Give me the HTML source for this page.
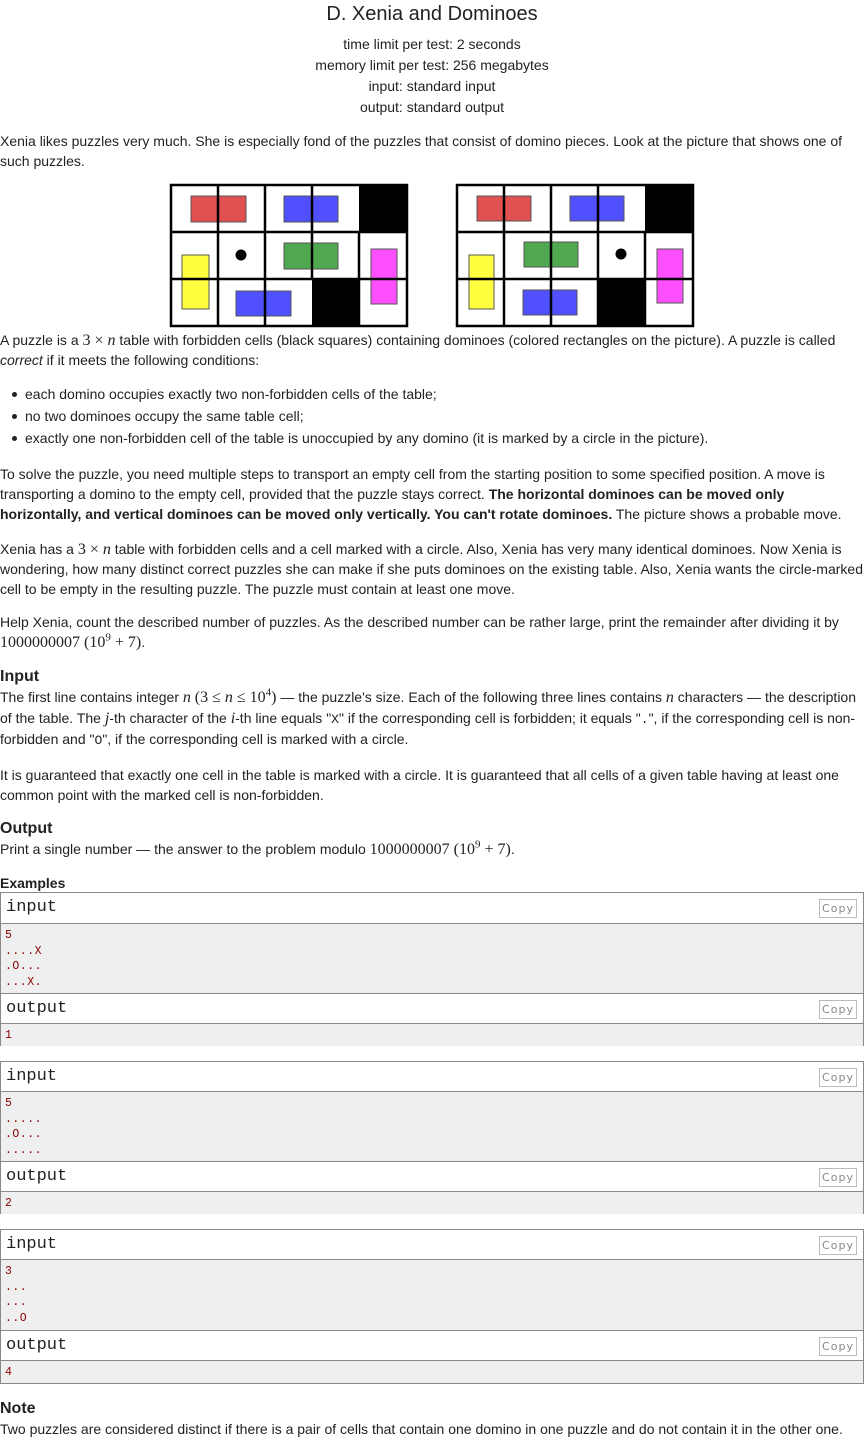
<!DOCTYPE html>
<html><head><meta charset="utf-8"><style>
*{margin:0;padding:0;box-sizing:border-box}
body{width:864px;height:1437px;position:relative;background:#fff;font-family:"Liberation Sans",sans-serif;font-size:14px;color:#222;overflow:hidden}
.a{position:absolute;left:0;width:864px;line-height:20px}
.c{text-align:center}
.m{font-family:"Liberation Serif",serif;font-size:16px;line-height:0}
.mi{font-family:"Liberation Serif",serif;font-size:16px;font-style:italic;line-height:0}
sup{line-height:0;font-size:11px}
.h{font-weight:bold;font-size:16px}
.tt{font-family:"Liberation Mono",monospace;font-size:13px;line-height:0}
.hd{position:absolute;left:0;width:864px;font-family:"Liberation Mono",monospace;font-size:17px;padding-left:5px;border-left:1px solid #888;border-right:1px solid #888;border-top:1px solid #888;background:#fff}
.pr{position:absolute;left:0;width:864px;background:#efefef;border-left:1px solid #888;border-right:1px solid #888;border-top:1px solid #888;font-family:"Liberation Mono",monospace;font-size:11.5px;letter-spacing:0.5px;line-height:15.5px;color:#8b0000;padding:4px 0 0 4px;white-space:pre}
.cp{position:absolute;right:6px;top:6px;width:38px;height:19px;border:1px solid #bbb;font-family:"DejaVu Sans",sans-serif;font-size:11px;color:#888;text-align:center;line-height:17px;letter-spacing:1px}
ul{position:absolute;left:25px;top:383px;list-style:none}
li{line-height:22px;position:relative}
li:before{content:"";position:absolute;left:-13px;top:9px;width:5px;height:5px;border-radius:50%;background:#222}
</style></head><body>
<div class="a c" style="top:3px;font-size:20px;line-height:22px">D. Xenia and Dominoes</div>
<div class="a c" style="top:34px;line-height:21px">time limit per test: 2 seconds<br>memory limit per test: 256 megabytes<br>input: standard input<br>output: standard output</div>
<div class="a" style="top:131px">Xenia likes puzzles very much. She is especially fond of the puzzles that consist of domino pieces. Look at the picture that shows one of such puzzles.</div>
<svg style="position:absolute;left:0;top:0" width="864" height="340">
<g>
<rect x="171" y="185" width="236" height="141" fill="#fff"/>
<rect x="359" y="185" width="48" height="47" fill="#000"/>
<rect x="312" y="279" width="47" height="47" fill="#000"/>
<rect x="191" y="196" width="55" height="26" fill="#e05050" stroke="#555"/>
<rect x="284" y="196" width="54" height="26" fill="#5050ff" stroke="#555"/>
<rect x="284" y="243" width="54" height="26" fill="#50a850" stroke="#555"/>
<rect x="182" y="255" width="27" height="54" fill="#ffff40" stroke="#555"/>
<rect x="371" y="249" width="26" height="55" fill="#ff50ff" stroke="#555"/>
<rect x="236" y="291" width="55" height="25" fill="#5050ff" stroke="#555"/>
<circle cx="241" cy="255" r="5.5" fill="#000"/>
<g stroke="#000" stroke-width="2.5" fill="none">
<rect x="171" y="185" width="236" height="141"/>
<line x1="171" y1="232" x2="407" y2="232"/><line x1="171" y1="279" x2="407" y2="279"/>
<line x1="218" y1="185" x2="218" y2="326"/><line x1="265" y1="185" x2="265" y2="326"/>
<line x1="312" y1="185" x2="312" y2="279"/><line x1="359" y1="232" x2="359" y2="326"/>
</g></g>
<g>
<rect x="457" y="185" width="236" height="141" fill="#fff"/>
<rect x="645" y="185" width="48" height="47" fill="#000"/>
<rect x="598" y="279" width="47" height="47" fill="#000"/>
<rect x="477" y="196" width="54" height="25" fill="#e05050" stroke="#555"/>
<rect x="570" y="196" width="54" height="25" fill="#5050ff" stroke="#555"/>
<rect x="524" y="242" width="54" height="25" fill="#50a850" stroke="#555"/>
<rect x="469" y="255" width="25" height="54" fill="#ffff40" stroke="#555"/>
<rect x="657" y="249" width="26" height="54" fill="#ff50ff" stroke="#555"/>
<rect x="523" y="290" width="54" height="25" fill="#5050ff" stroke="#555"/>
<circle cx="621" cy="254" r="5.5" fill="#000"/>
<g stroke="#000" stroke-width="2.5" fill="none">
<rect x="457" y="185" width="236" height="141"/>
<line x1="457" y1="232" x2="693" y2="232"/><line x1="457" y1="279" x2="693" y2="279"/>
<line x1="504" y1="185" x2="504" y2="326"/><line x1="551" y1="185" x2="551" y2="326"/>
<line x1="598" y1="185" x2="598" y2="326"/><line x1="645" y1="232" x2="645" y2="326"/>
</g></g>
</svg>
<div class="a" style="top:330px">A puzzle is a <span class="m">3 × <i>n</i></span> table with forbidden cells (black squares) containing dominoes (colored rectangles on the picture). A puzzle is called <i>correct</i> if it meets the following conditions:</div>
<ul>
<li>each domino occupies exactly two non-forbidden cells of the table;</li>
<li>no two dominoes occupy the same table cell;</li>
<li>exactly one non-forbidden cell of the table is unoccupied by any domino (it is marked by a circle in the picture).</li>
</ul>
<div class="a" style="top:464px">To solve the puzzle, you need multiple steps to transport an empty cell from the starting position to some specified position. A move is transporting a domino to the empty cell, provided that the puzzle stays correct. <b>The horizontal dominoes can be moved only horizontally, and vertical dominoes can be moved only vertically. You can't rotate dominoes.</b> The picture shows a probable move.</div>
<div class="a" style="top:539px">Xenia has a <span class="m">3 × <i>n</i></span> table with forbidden cells and a cell marked with a circle. Also, Xenia has very many identical dominoes. Now Xenia is wondering, how many distinct correct puzzles she can make if she puts dominoes on the existing table. Also, Xenia wants the circle-marked cell to be empty in the resulting puzzle. The puzzle must contain at least one move.</div>
<div class="a" style="top:612px">Help Xenia, count the described number of puzzles. As the described number can be rather large, print the remainder after dividing it by<br><span class="m">1000000007 (10<sup>9</sup> + 7)</span>.</div>
<div class="a h" style="top:667px">Input</div>
<div class="a" style="top:687px;line-height:21px">The first line contains integer <span class="mi">n</span> <span class="m">(3 ≤ <i>n</i> ≤ 10<sup>4</sup>)</span> — the puzzle's size. Each of the following three lines contains <span class="mi">n</span> characters — the description of the table. The <span class="mi">j</span>-th character of the <span class="mi">i</span>-th line equals "<span class="tt">X</span>" if the corresponding cell is forbidden; it equals "<span class="tt">.</span>", if the corresponding cell is non-forbidden and "<span class="tt">O</span>", if the corresponding cell is marked with a circle.</div>
<div class="a" style="top:765px">It is guaranteed that exactly one cell in the table is marked with a circle. It is guaranteed that all cells of a given table having at least one common point with the marked cell is non-forbidden.</div>
<div class="a h" style="top:819px">Output</div>
<div class="a" style="top:839px">Print a single number — the answer to the problem modulo <span class="m">1000000007 (10<sup>9</sup> + 7)</span>.</div>
<div class="a" style="top:873px;font-weight:bold">Examples</div>

<div class="hd" style="top:892px;height:31px;line-height:30px">input<div class="cp">Copy</div></div>
<div class="pr" style="top:923px;height:70px">5
....X
.O...
...X.</div>
<div class="hd" style="top:993px;height:30px;line-height:29px">output<div class="cp">Copy</div></div>
<div class="pr" style="top:1023px;height:23px">1</div>

<div class="hd" style="top:1061px;height:30px;line-height:29px">input<div class="cp">Copy</div></div>
<div class="pr" style="top:1091px;height:70px">5
.....
.O...
.....</div>
<div class="hd" style="top:1161px;height:30px;line-height:29px">output<div class="cp">Copy</div></div>
<div class="pr" style="top:1191px;height:23px">2</div>

<div class="hd" style="top:1229px;height:30px;line-height:29px">input<div class="cp">Copy</div></div>
<div class="pr" style="top:1259px;height:71px">3
...
...
..O</div>
<div class="hd" style="top:1330px;height:30px;line-height:29px">output<div class="cp">Copy</div></div>
<div class="pr" style="top:1360px;height:24px;border-bottom:1px solid #888">4</div>

<div class="a h" style="top:1399px">Note</div>
<div class="a" style="top:1419px">Two puzzles are considered distinct if there is a pair of cells that contain one domino in one puzzle and do not contain it in the other one.</div>
</body></html>
